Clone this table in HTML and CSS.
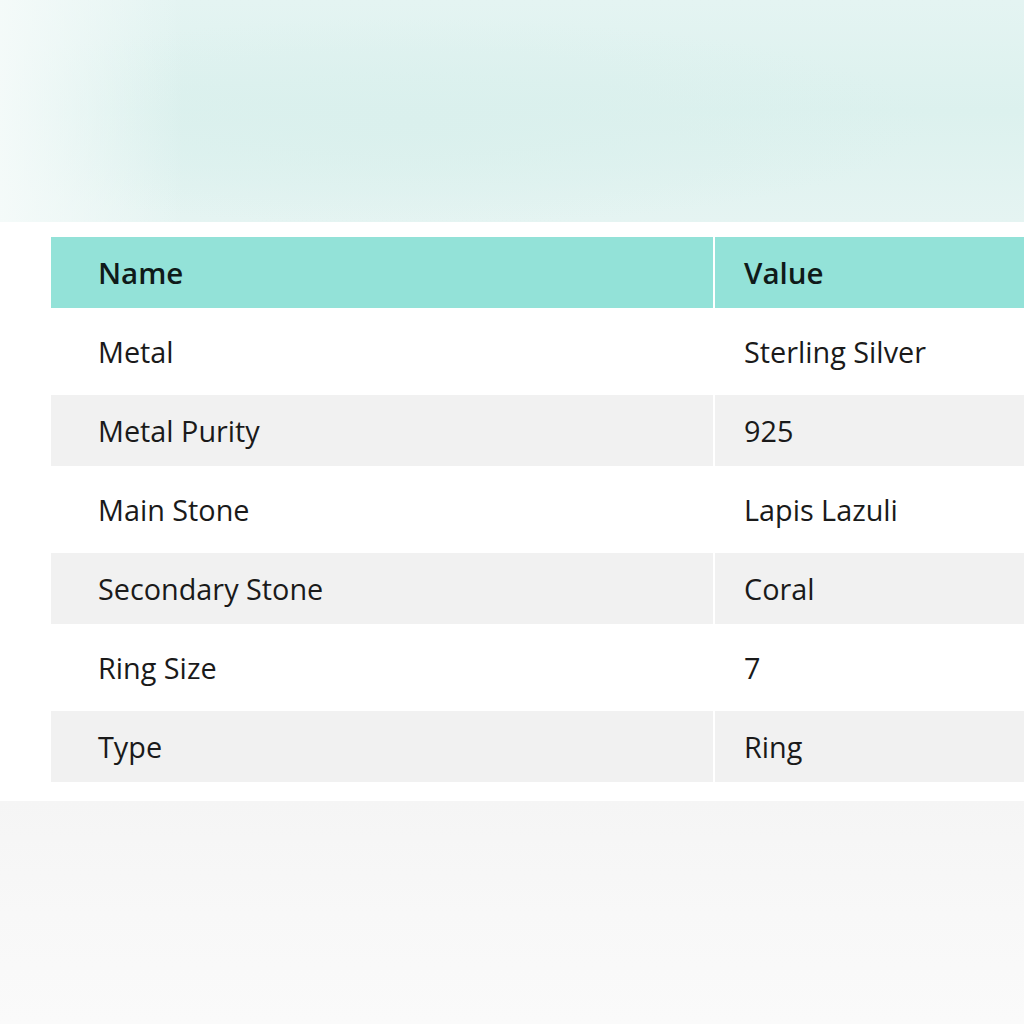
FILE: index.html
```html
<!DOCTYPE html>
<html lang="en">
<head>
<meta charset="utf-8">
<title>Specifications</title>
<link rel="stylesheet" href="styles.css">
</head>
<body>
<div class="page">
  <div class="hero"></div>
  <section class="content">
    <table class="specs">
      <thead>
        <tr><th class="c-name">Name</th><th class="c-value">Value</th></tr>
      </thead>
      <tbody>
        <tr class="odd"><td class="c-name">Metal</td><td class="c-value">Sterling Silver</td></tr>
        <tr class="even"><td class="c-name">Metal Purity</td><td class="c-value">925</td></tr>
        <tr class="odd"><td class="c-name">Main Stone</td><td class="c-value">Lapis Lazuli</td></tr>
        <tr class="even"><td class="c-name">Secondary Stone</td><td class="c-value">Coral</td></tr>
        <tr class="odd"><td class="c-name">Ring Size</td><td class="c-value">7</td></tr>
        <tr class="even"><td class="c-name">Type</td><td class="c-value">Ring</td></tr>
      </tbody>
    </table>
  </section>
  <div class="footer-band"></div>
</div>
</body>
</html>
```

FILE: styles.css
```css
* { box-sizing: border-box; }
html, body { margin: 0; padding: 0; }
body {
  width: 1024px;
  height: 1024px;
  overflow: hidden;
  background: #ffffff;
  font-family: "Open Sans", "Noto Sans", sans-serif;
  color: #1f1f1f;
}
.page {
  display: flex;
  flex-direction: column;
  height: 1024px;
}
.hero {
  height: 222px;
  flex: none;
  background:
    linear-gradient(90deg, rgba(246,251,250,0.9) 0%, rgba(246,251,250,0) 18%),
    radial-gradient(ellipse at 40% 55%, #daf0ed 0%, rgba(218,240,237,0) 60%),
    linear-gradient(180deg, #e4f4f2 0%, #dcf1ee 50%, #e5f4f2 100%);
}
.content {
  flex: none;
  padding: 15px 0 19px 51px;
  overflow: hidden;
}
.specs {
  border-collapse: separate;
  border-spacing: 0;
  width: 1100px;
  table-layout: fixed;
}
.specs .c-name { width: 664px; padding-left: 47px; border-right: 2px solid #ffffff; }
.specs .c-value { padding-left: 29px; }
.specs th {
  background: #93e2d8;
  height: 71px;
  text-align: left;
  font-weight: 600;
  font-size: 29.5px;
  color: #0f1a19;
  padding-top: 0;
  padding-bottom: 0;
}
.specs td {
  font-size: 28.8px;
  font-weight: 400;
  color: #1a1a1a;
  padding-top: 0;
  padding-bottom: 0;
}
.specs tr.odd td { height: 87px; background: #ffffff; }
.specs tr.even td { height: 71px; background: #f1f1f1; }
.footer-band {
  flex: 1;
  background: linear-gradient(180deg, #f5f5f5 0%, #f8f8f8 50%, #fafafa 100%);
}
```
